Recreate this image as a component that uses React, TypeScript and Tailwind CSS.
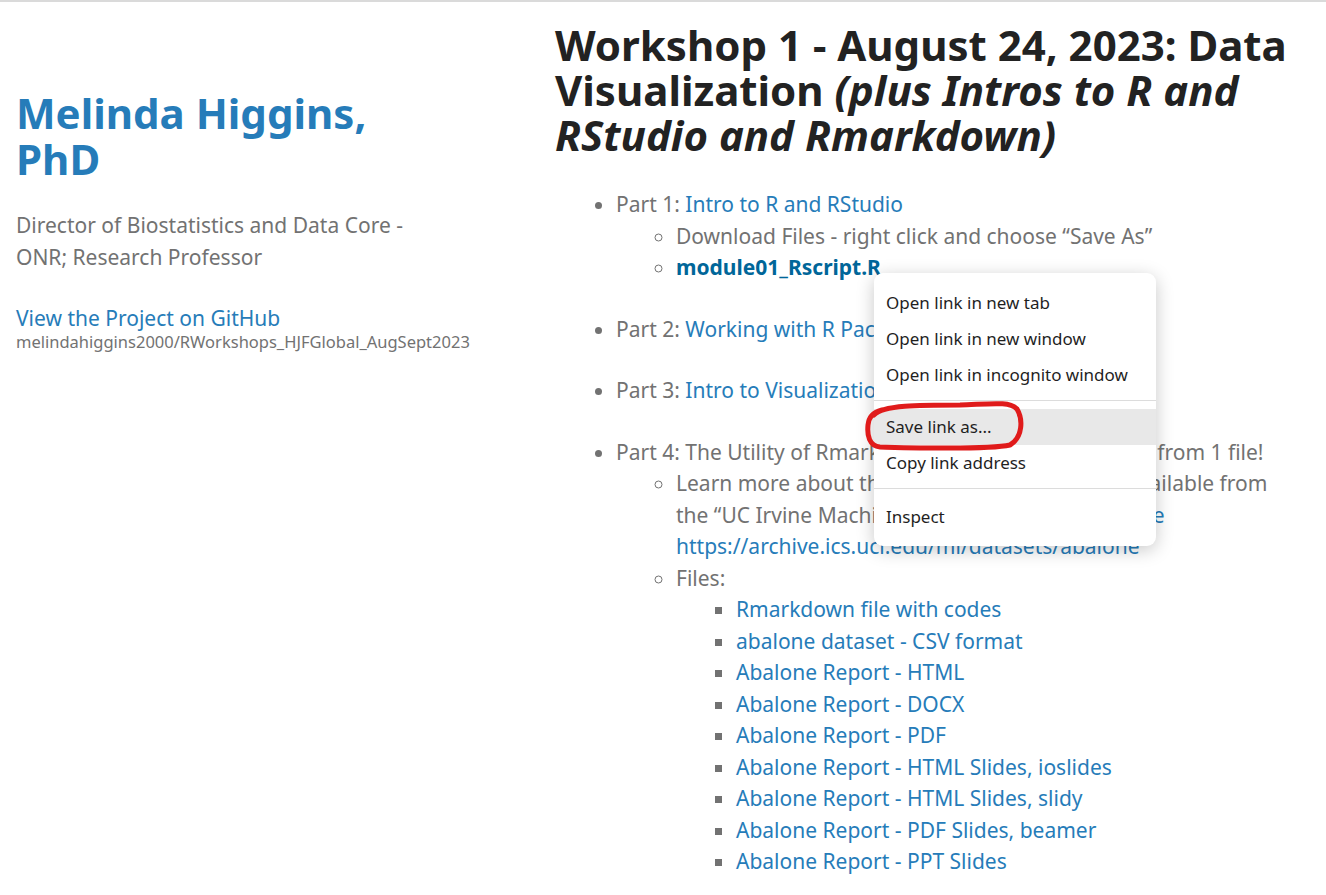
const files = [
  "Rmarkdown file with codes",
  "abalone dataset - CSV format",
  "Abalone Report - HTML",
  "Abalone Report - DOCX",
  "Abalone Report - PDF",
  "Abalone Report - HTML Slides, ioslides",
  "Abalone Report - HTML Slides, slidy",
  "Abalone Report - PDF Slides, beamer",
  "Abalone Report - PPT Slides",
];

function ContextMenu() {
  const item = "h-[36px] flex items-center px-[12px]";
  return (
    <div className="absolute left-[874px] top-[271px] w-[282px] bg-white rounded-[9px] shadow-[0_4px_18px_rgba(0,0,0,0.22)] pt-[12px] pb-[11px] text-[17px] text-[#1f1f1f] font-['Noto_Sans',sans-serif]">
      <div className={item}>Open link in new tab</div>
      <div className={item}>Open link in new window</div>
      <div className={item}>Open link in incognito window</div>
      <div className="mt-[7px] mb-[8px] border-t border-[#dcdcdc]" />
      <div className={`${item} bg-[#e8e8e8]`}>Save link as...</div>
      <div className={item}>Copy link address</div>
      <div className="mt-[7px] mb-[10px] border-t border-[#dcdcdc]" />
      <div className={item}>Inspect</div>
    </div>
  );
}

function RedMark() {
  return (
    <svg className="absolute left-[860px] top-[395px]" width="170" height="60" viewBox="0 0 170 60" fill="none">
      <path
        d="M14 18 C22 8 60 8 100 8 C130 7 150 4 157 12 C163 22 163 40 150 48 C128 53 60 51 20 50 C9 49 7 38 8 28 C9 20 12 16 22 13"
        stroke="#e01b1b"
        strokeWidth="5"
        strokeLinecap="round"
      />
    </svg>
  );
}

export default function App() {
  return (
    <div className="relative w-[1326px] h-[895px] overflow-hidden bg-white border-t-2 border-[#dadada] font-['Noto_Sans',sans-serif] text-[21px] leading-[31.5px] text-[#727272]">
      <div className="flex">
        {/* Header */}
        <header className="w-[555px] shrink-0 pl-[16px] pt-[88px]">
          <h1 className="w-[405px] text-[42px] leading-[46px] font-bold text-[#267cb9] mb-[27px]">
            Melinda Higgins, PhD
          </h1>
          <p className="w-[405px] leading-[32px] mb-[30px]">
            Director of Biostatistics and Data Core - ONR; Research Professor
          </p>
          <a className="block text-[#267cb9]">View the Project on GitHub</a>
          <small className="block text-[16.5px] leading-[18px] -mt-[2px] text-[#727272]">
            melindahiggins2000/RWorkshops_HJFGlobal_AugSept2023
          </small>
        </header>

        {/* Section */}
        <section className="w-[750px] pt-[20px]">
          <h2 className="text-[42px] leading-[45px] font-bold text-[#222] mb-[32px]">
            Workshop 1 - August 24, 2023: Data Visualization <em>(plus Intros to R and RStudio and Rmarkdown)</em>
          </h2>
          <ul className="list-disc pl-[61px] mb-[30px]">
            <li>
              Part 1: <a className="text-[#267cb9]">Intro to R and RStudio</a>
              <ul className="list-[circle] pl-[60px]">
                <li>Download Files - right click and choose “Save As”</li>
                <li>
                  <a className="font-bold text-[#069]">module01_Rscript.R</a>
                </li>
              </ul>
            </li>
          </ul>
          <ul className="list-disc pl-[61px] mb-[30px]">
            <li>
              Part 2: <a className="text-[#267cb9]">Working with R Packages</a>
            </li>
          </ul>
          <ul className="list-disc pl-[61px] mb-[30px]">
            <li>
              Part 3: <a className="text-[#267cb9]">Intro to Visualization</a>
            </li>
          </ul>
          <ul className="list-disc pl-[61px]">
            <li>
              Part 4: The Utility of Rmarkdown - create many reports from 1 file!
              <ul className="list-[circle] pl-[60px]">
                <li>
                  Learn more about the abalone dataset that is available from the “UC Irvine Machine Learning Repository” <a className="text-[#267cb9]">here</a>{" "}
                  <a className="text-[#267cb9]">https://archive.ics.uci.edu/ml/datasets/abalone</a>
                </li>
                <li>
                  Files:
                  <ul className="list-[square] pl-[60px]">
                    {files.map((f) => (
                      <li key={f}>
                        <a className="text-[#267cb9]">{f}</a>
                      </li>
                    ))}
                  </ul>
                </li>
              </ul>
            </li>
          </ul>
        </section>
      </div>

      <ContextMenu />
      <RedMark />
    </div>
  );
}
